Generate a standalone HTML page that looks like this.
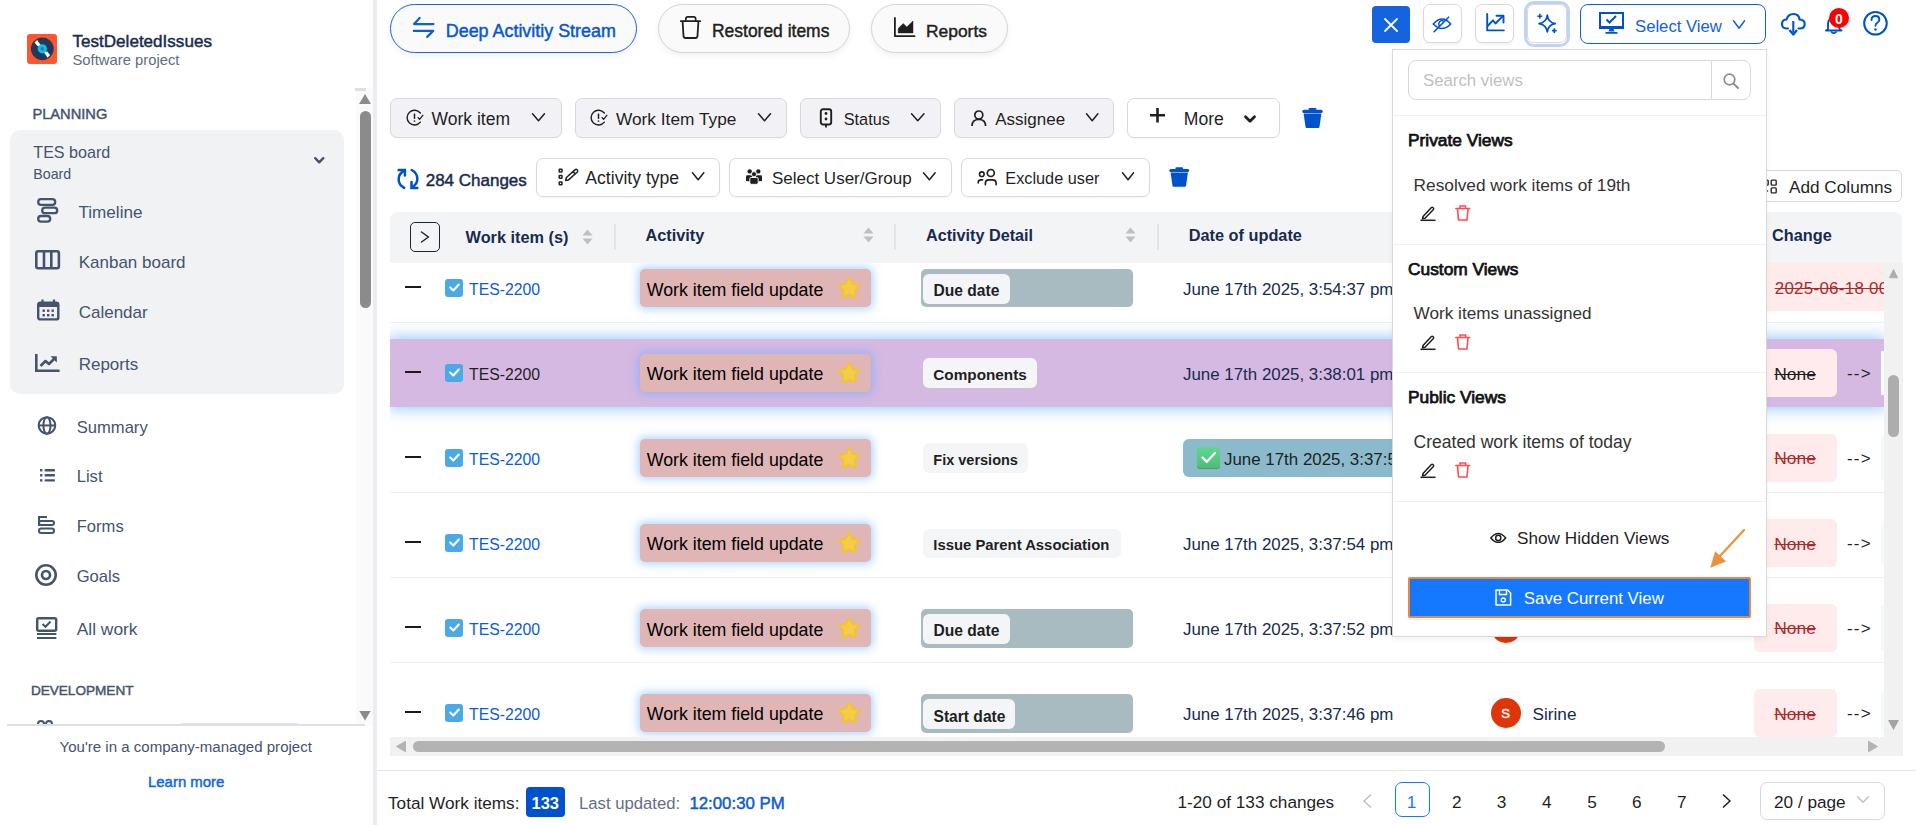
<!DOCTYPE html><html><head><meta charset="utf-8"><style>
html,body{margin:0;padding:0;width:1916px;height:825px;overflow:hidden;background:#fff;font-family:"Liberation Sans",sans-serif;}
.t{position:absolute;line-height:1;white-space:nowrap;}
svg{overflow:visible}
</style></head><body>
<div style="position:absolute;left:373.0px;top:0.0px;width:4.0px;height:825.0px;background:#ebecf0"></div>
<div style="position:absolute;left:356.0px;top:88.0px;width:17.0px;height:637.0px;background:#fafafa"></div>
<div style="position:absolute;left:355.0px;top:88.0px;width:11.0px;height:3.0px;background:#dcdfe4"></div>
<svg style="position:absolute;left:359.0px;top:94.0px;" width="12.0" height="10.0" viewBox="0 0 12 10" fill="none"><path d="M6 0 L12 10 L0 10 Z" fill="#8b8b8b"/></svg>
<div style="position:absolute;left:360.0px;top:111.0px;width:11.0px;height:197.0px;background:#8b8b8b;border-radius:6px"></div>
<svg style="position:absolute;left:359.0px;top:711.0px;" width="12.0" height="9.5" viewBox="0 0 12 10" fill="none"><path d="M0 0 L12 0 L6 10 Z" fill="#8b8b8b"/></svg>
<div style="position:absolute;left:27.0px;top:34.0px;width:30.0px;height:30.0px;background:#ff5630;border-radius:3px"></div>
<svg style="position:absolute;left:27.0px;top:34.0px;" width="30.0" height="30.0" viewBox="0 0 30 30" fill="none"><circle cx="15.3" cy="14.8" r="11.4" fill="#253858"/><path d="M7.5 8.6 L10.4 5.9 L12 10.5 L10.5 12 Z M23.1 21 L20.2 23.7 L18.6 19.1 L20.1 17.6 Z" fill="#fff"/><path d="M9 7.4 L21.6 22.2" stroke="#fff" stroke-width="2.6"/><circle cx="15.3" cy="14.8" r="4.6" fill="#00c7e6"/><circle cx="15.3" cy="14.8" r="1.7" fill="#6554c0"/></svg>
<div class="t" style="left:72.5px;top:33px;font-size:17.07px;font-weight:normal;color:#172b4d;-webkit-text-stroke:0.45px #172b4d;">TestDeletedIssues</div>
<div class="t" style="left:72.5px;top:53px;font-size:14.8px;font-weight:normal;color:#5e6c84;">Software project</div>
<div class="t" style="left:32.4px;top:107px;font-size:14.67px;font-weight:normal;color:#44546f;-webkit-text-stroke:0.45px #44546f;">PLANNING</div>
<div style="position:absolute;left:10.0px;top:129.6px;width:334.0px;height:264.8px;background:#f1f2f4;border-radius:10px"></div>
<div class="t" style="left:33.3px;top:144px;font-size:16.1px;font-weight:normal;color:#44546f;">TES board</div>
<div class="t" style="left:33.3px;top:167px;font-size:14.2px;font-weight:normal;color:#44546f;">Board</div>
<svg style="position:absolute;left:313.5px;top:157.0px;" width="10.5" height="7.0" viewBox="0 0 10.5 7" fill="none"><path d="M1.2 1.2 L5.25 5.3 L9.3 1.2" stroke="#44546f" stroke-width="2.4" stroke-linecap="round" stroke-linejoin="round"/></svg>
<svg style="position:absolute;left:37.0px;top:197.6px;" width="21.5" height="24.8" viewBox="0 0 21.5 24.8" fill="none"><rect x="1.2" y="1.2" width="17" height="5.6" rx="2.8" stroke="#44546f" stroke-width="2.3"/><rect x="5.2" y="9.6" width="15" height="5.6" rx="2.8" stroke="#44546f" stroke-width="2.3"/><rect x="1.2" y="18" width="12" height="5.6" rx="2.8" stroke="#44546f" stroke-width="2.3"/></svg>
<div class="t" style="left:78.5px;top:204px;font-size:17.1px;font-weight:normal;color:#44546f;">Timeline</div>
<svg style="position:absolute;left:35.4px;top:250.0px;" width="25.2" height="19.5" viewBox="0 0 25.2 19.5" fill="none"><rect x="1.3" y="1.3" width="22.6" height="16.9" rx="2" stroke="#44546f" stroke-width="2.6"/><path d="M9 1.5 V18 M16.3 1.5 V18" stroke="#44546f" stroke-width="2.6"/></svg>
<div class="t" style="left:78.7px;top:254px;font-size:17.0px;font-weight:normal;color:#44546f;">Kanban board</div>
<svg style="position:absolute;left:36.5px;top:299.0px;" width="22.5" height="21.6" viewBox="0 0 22.5 21.6" fill="none"><rect x="1.2" y="3.6" width="20.1" height="16.8" rx="2" stroke="#44546f" stroke-width="2.4"/><rect x="1" y="3.4" width="20.5" height="4.6" fill="#44546f"/><path d="M5.5 0.5 V4 M17 0.5 V4" stroke="#44546f" stroke-width="2.2"/><g fill="#44546f"><rect x="5.5" y="10.5" width="2.4" height="2.4"/><rect x="10" y="10.5" width="2.4" height="2.4"/><rect x="14.5" y="10.5" width="2.4" height="2.4"/><rect x="5.5" y="15" width="2.4" height="2.4"/><rect x="10" y="15" width="2.4" height="2.4"/><rect x="14.5" y="15" width="2.4" height="2.4"/></g></svg>
<div class="t" style="left:78.7px;top:304px;font-size:17.0px;font-weight:normal;color:#44546f;">Calendar</div>
<svg style="position:absolute;left:35.4px;top:353.6px;" width="24.6" height="18.1" viewBox="0 0 24.6 18.1" fill="none"><path d="M1.3 0 V16.8 H24.6" stroke="#44546f" stroke-width="2.6"/><path d="M5.5 12 L10.5 7 L14 10 L20.5 3.5" stroke="#44546f" stroke-width="2.6" stroke-linejoin="round"/><path d="M15.5 2.2 H21.8 V8.5 Z" fill="#44546f"/></svg>
<div class="t" style="left:78.7px;top:356px;font-size:17.0px;font-weight:normal;color:#44546f;">Reports</div>
<svg style="position:absolute;left:37.3px;top:416.4px;" width="19.9" height="18.9" viewBox="0 0 20 19" fill="none"><circle cx="10" cy="9.5" r="8.3" stroke="#44546f" stroke-width="2.1"/><ellipse cx="10" cy="9.5" rx="3.6" ry="8.3" stroke="#44546f" stroke-width="2"/><path d="M1.7 9.5 H18.3" stroke="#44546f" stroke-width="2"/></svg>
<div class="t" style="left:76.7px;top:420px;font-size:16.6px;font-weight:normal;color:#44546f;">Summary</div>
<svg style="position:absolute;left:39.5px;top:468.7px;" width="15.1" height="12.6" viewBox="0 0 15 12.6" fill="none"><g fill="#44546f"><rect x="0" y="0" width="2.4" height="2.4"/><rect x="0" y="5.1" width="2.4" height="2.4"/><rect x="0" y="10.2" width="2.4" height="2.4"/><rect x="4.5" y="0" width="10.5" height="2.4" rx="1"/><rect x="4.5" y="5.1" width="10.5" height="2.4" rx="1"/><rect x="4.5" y="10.2" width="10.5" height="2.4" rx="1"/></g></svg>
<div class="t" style="left:76.7px;top:469px;font-size:16.6px;font-weight:normal;color:#44546f;">List</div>
<svg style="position:absolute;left:38.0px;top:516.0px;" width="17.0" height="18.0" viewBox="0 0 17 18" fill="none"><path d="M1 1 H9" stroke="#44546f" stroke-width="2"/><rect x="1" y="5" width="15" height="4" rx="2" stroke="#44546f" stroke-width="2"/><rect x="1" y="12.5" width="15" height="4.5" rx="2.2" stroke="#44546f" stroke-width="2"/><path d="M1 0 V10" stroke="#44546f" stroke-width="2"/></svg>
<div class="t" style="left:76.7px;top:519px;font-size:16.6px;font-weight:normal;color:#44546f;">Forms</div>
<svg style="position:absolute;left:35.0px;top:563.8px;" width="22.0" height="22.0" viewBox="0 0 22 22" fill="none"><circle cx="11" cy="11" r="9.7" stroke="#44546f" stroke-width="2.6"/><circle cx="11" cy="11" r="4" stroke="#44546f" stroke-width="2.6"/></svg>
<div class="t" style="left:76.7px;top:569px;font-size:16.6px;font-weight:normal;color:#44546f;">Goals</div>
<svg style="position:absolute;left:36.4px;top:616.7px;" width="21.4" height="22.0" viewBox="0 0 21.4 22" fill="none"><rect x="1.2" y="1.2" width="19" height="12.5" rx="1.5" stroke="#44546f" stroke-width="2.4"/><path d="M6.5 7 L9.5 9.8 L14.5 4.5" stroke="#44546f" stroke-width="2"/><path d="M1 17 H20.4 M1 21 H20.4" stroke="#44546f" stroke-width="2.2"/></svg>
<div class="t" style="left:76.7px;top:621px;font-size:17.4px;font-weight:normal;color:#44546f;">All work</div>
<div class="t" style="left:30.9px;top:684px;font-size:13.59px;font-weight:normal;color:#44546f;-webkit-text-stroke:0.45px #44546f;">DEVELOPMENT</div>
<svg style="position:absolute;left:36.0px;top:719.0px;" width="18.0" height="6.0" viewBox="0 0 18 6" fill="none"><circle cx="5" cy="5" r="3" stroke="#44546f" stroke-width="2"/><circle cx="13" cy="5" r="3" stroke="#44546f" stroke-width="2"/></svg>
<div style="position:absolute;left:180.0px;top:723.0px;width:118.0px;height:2.0px;background:#e6e3f7;border-radius:2px"></div>
<div style="position:absolute;left:7.0px;top:724.0px;width:358.0px;height:2.0px;background:#dcdfe4"></div>
<div style="position:absolute;left:0.0px;top:726.0px;width:373.0px;height:99.0px;background:#fff"></div>
<div class="t" style="left:59.5px;top:739px;font-size:15.05px;font-weight:normal;color:#44546f;">You're in a company-managed project</div>
<div class="t" style="left:148.0px;top:775px;font-size:14.94px;font-weight:normal;color:#0c66e4;-webkit-text-stroke:0.45px #0c66e4;">Learn more</div>
<div style="position:absolute;left:390.0px;top:4.0px;width:247.0px;height:49.0px;box-sizing:border-box;border-radius:25px;background:#fafafa;box-shadow:0 3px 6px rgba(0,0,0,0.06);border:1.3px solid #1f62d6"></div>
<svg style="position:absolute;left:413.0px;top:17.0px;" width="21.0" height="20.0" viewBox="0 0 21 20" fill="none"><path d="M20.5 7.1 H1.1 L6.6 0.9" stroke="#0c5fd6" stroke-width="2.2" stroke-linecap="round" stroke-linejoin="round"/><path d="M0.8 13.9 H20.2 L14.2 19.9" stroke="#0c5fd6" stroke-width="2.2" stroke-linecap="round" stroke-linejoin="round"/></svg>
<div class="t" style="left:445.8px;top:23px;font-size:17.9px;font-weight:normal;color:#0656d0;-webkit-text-stroke:0.45px #0656d0;">Deep Activitiy Stream</div>
<div style="position:absolute;left:657.5px;top:4.4px;width:192.5px;height:48.2px;box-sizing:border-box;border-radius:25px;background:#fafafa;box-shadow:0 3px 6px rgba(0,0,0,0.06);border:1px solid #d4d4d4"></div>
<svg style="position:absolute;left:680.0px;top:16.0px;" width="21.0" height="23.0" viewBox="0 0 21 23" fill="none"><path d="M0.8 5.2 H20.2" stroke="#1f1f1f" stroke-width="1.8" stroke-linecap="round"/><path d="M5.8 5 V3 Q5.8 0.9 7.9 0.9 H13.6 Q15.7 0.9 15.7 3 V5" stroke="#1f1f1f" stroke-width="1.7"/><path d="M2.6 5.5 L3.5 19.8 Q3.7 22 5.7 22 H15.3 Q17.3 22 17.5 19.8 L18.4 5.5" stroke="#1f1f1f" stroke-width="1.8" stroke-linejoin="round"/></svg>
<div class="t" style="left:712.0px;top:23px;font-size:17.47px;font-weight:normal;color:#1f1f1f;-webkit-text-stroke:0.45px #1f1f1f;">Restored items</div>
<div style="position:absolute;left:871.0px;top:4.4px;width:136.5px;height:48.2px;box-sizing:border-box;border-radius:25px;background:#fafafa;box-shadow:0 3px 6px rgba(0,0,0,0.06);border:1px solid #d4d4d4"></div>
<svg style="position:absolute;left:894.0px;top:17.0px;" width="21.0" height="20.0" viewBox="0 0 21 20" fill="none"><path d="M0.9 0.9 V19.1 H20.6" stroke="#1f1f1f" stroke-width="1.8" stroke-linecap="round" stroke-linejoin="round"/><path d="M4.2 15.9 V11.5 L9.2 6.6 L12.8 10 L19 4 V15.9 Z" fill="#1f1f1f" stroke="#1f1f1f" stroke-width="0.5" stroke-linejoin="round"/></svg>
<div class="t" style="left:926.0px;top:23px;font-size:17.42px;font-weight:normal;color:#1f1f1f;-webkit-text-stroke:0.45px #1f1f1f;">Reports</div>
<div style="position:absolute;left:390.0px;top:98.0px;width:171.5px;height:39.5px;box-sizing:border-box;border-radius:7px;background:#f2f2f6;border:1px solid #d9d9d9;box-shadow:0 1px 2px rgba(0,0,0,0.04);"></div>
<svg style="position:absolute;left:405.0px;top:108.0px;" width="20.0" height="20.0" viewBox="0 0 20 20" fill="none"><path d="M15.33 5.04 A7.4 7.4 0 1 0 15.33 14.16" stroke="#1f1f1f" stroke-width="1.4" stroke-linecap="round"/><path d="M9.5 5.6 V10.9" stroke="#1f1f1f" stroke-width="1.5"/><circle cx="9.5" cy="13" r="0.85" fill="#1f1f1f"/><path d="M13.1 9.6 L14.6 11.3 L17.8 7.3" stroke="#1f1f1f" stroke-width="1.3" stroke-linecap="round" stroke-linejoin="round"/></svg>
<div class="t" style="left:431.6px;top:111px;font-size:17.5px;font-weight:normal;color:#1f1f1f;">Work item</div>
<svg style="position:absolute;left:532.0px;top:113.0px;" width="13.0" height="8.5" viewBox="0 0 13.0 8.5" fill="none"><path d="M0.5 0.8 L6.50 7.70 L12.50 0.8" stroke="#1f1f1f" stroke-width="1.5" stroke-linecap="round" stroke-linejoin="round"/></svg>
<div style="position:absolute;left:574.5px;top:98.0px;width:212.9px;height:39.5px;box-sizing:border-box;border-radius:7px;background:#f2f2f6;border:1px solid #d9d9d9;box-shadow:0 1px 2px rgba(0,0,0,0.04);"></div>
<svg style="position:absolute;left:589.0px;top:108.0px;" width="20.0" height="20.0" viewBox="0 0 20 20" fill="none"><path d="M15.33 5.04 A7.4 7.4 0 1 0 15.33 14.16" stroke="#1f1f1f" stroke-width="1.4" stroke-linecap="round"/><path d="M9.5 5.6 V10.9" stroke="#1f1f1f" stroke-width="1.5"/><circle cx="9.5" cy="13" r="0.85" fill="#1f1f1f"/><path d="M13.1 9.6 L14.6 11.3 L17.8 7.3" stroke="#1f1f1f" stroke-width="1.3" stroke-linecap="round" stroke-linejoin="round"/></svg>
<div class="t" style="left:616.0px;top:111px;font-size:17.3px;font-weight:normal;color:#1f1f1f;">Work Item Type</div>
<svg style="position:absolute;left:758.0px;top:113.0px;" width="13.0" height="8.5" viewBox="0 0 13.0 8.5" fill="none"><path d="M0.5 0.8 L6.50 7.70 L12.50 0.8" stroke="#1f1f1f" stroke-width="1.5" stroke-linecap="round" stroke-linejoin="round"/></svg>
<div style="position:absolute;left:800.3px;top:98.0px;width:140.4px;height:39.5px;box-sizing:border-box;border-radius:7px;background:#f2f2f6;border:1px solid #d9d9d9;box-shadow:0 1px 2px rgba(0,0,0,0.04);"></div>
<svg style="position:absolute;left:819.0px;top:108.0px;" width="14.0" height="20.0" viewBox="0 0 14 20" fill="none"><rect x="1.8" y="1.2" width="10.4" height="15.3" rx="2.2" stroke="#1f1f1f" stroke-width="1.9"/><circle cx="7" cy="5.5" r="1.4" fill="#1f1f1f"/><circle cx="7" cy="11" r="1.4" fill="#1f1f1f"/><path d="M7 16.5 V19.5" stroke="#1f1f1f" stroke-width="1.8"/></svg>
<div class="t" style="left:843.7px;top:111px;font-size:16.3px;font-weight:normal;color:#1f1f1f;">Status</div>
<svg style="position:absolute;left:910.5px;top:113.0px;" width="13.5" height="8.5" viewBox="0 0 13.5 8.5" fill="none"><path d="M0.5 0.8 L6.75 7.70 L13.00 0.8" stroke="#1f1f1f" stroke-width="1.5" stroke-linecap="round" stroke-linejoin="round"/></svg>
<div style="position:absolute;left:954.2px;top:98.0px;width:160.1px;height:39.5px;box-sizing:border-box;border-radius:7px;background:#f2f2f6;border:1px solid #d9d9d9;box-shadow:0 1px 2px rgba(0,0,0,0.04);"></div>
<svg style="position:absolute;left:971.0px;top:109.5px;" width="15.6" height="16.5" viewBox="0 0 15.6 16.5" fill="none"><circle cx="7.8" cy="5" r="4" stroke="#1f1f1f" stroke-width="1.7"/><path d="M1 16 C1 11.5 4 9.5 7.8 9.5 C11.6 9.5 14.6 11.5 14.6 16" stroke="#1f1f1f" stroke-width="1.7"/></svg>
<div class="t" style="left:995.2px;top:111px;font-size:17.0px;font-weight:normal;color:#1f1f1f;">Assignee</div>
<svg style="position:absolute;left:1085.6px;top:113.0px;" width="12.4" height="8.5" viewBox="0 0 12.4 8.5" fill="none"><path d="M0.5 0.8 L6.20 7.70 L11.90 0.8" stroke="#1f1f1f" stroke-width="1.5" stroke-linecap="round" stroke-linejoin="round"/></svg>
<div style="position:absolute;left:1127.0px;top:98.0px;width:153.0px;height:39.5px;box-sizing:border-box;border-radius:7px;background:#fff;border:1px solid #d9d9d9;box-shadow:0 1px 2px rgba(0,0,0,0.04);"></div>
<svg style="position:absolute;left:1150.0px;top:108.0px;" width="15.0" height="14.5" viewBox="0 0 15 14.5" fill="none"><path d="M7.5 0 V14.5 M0 7.25 H15" stroke="#1f1f1f" stroke-width="2.6"/></svg>
<div class="t" style="left:1183.8px;top:111px;font-size:17.6px;font-weight:normal;color:#1f1f1f;">More</div>
<svg style="position:absolute;left:1245.0px;top:115.5px;" width="10.0" height="6.0" viewBox="0 0 10.0 6.0" fill="none"><path d="M0.5 0.8 L5.00 5.20 L9.50 0.8" stroke="#1f1f1f" stroke-width="2.8" stroke-linecap="round" stroke-linejoin="round"/></svg>
<svg style="position:absolute;left:1302.0px;top:108.0px;" width="21.0" height="20.0" viewBox="0 0 21 20" fill="none"><path d="M7.5 1 H13.5" stroke="#0052cc" stroke-width="2" stroke-linecap="round"/><rect x="0.3" y="1.8" width="20.4" height="3.2" rx="1.6" fill="#0052cc"/><path d="M1.6 5.5 H19.4 L17.4 19.3 Q17.2 20 16.4 20 H4.6 Q3.8 20 3.6 19.3 Z" fill="#0052cc"/></svg>
<svg style="position:absolute;left:390.0px;top:160.0px;" width="40.0" height="35.0" viewBox="0 0 40 35" fill="none"><path d="M14.3 10.6 C6.8 14.5 6.8 24 14.2 27.9" stroke="#0052cc" stroke-width="2.5" stroke-linecap="round"/><path d="M8.6 9.9 H14.9 V15.6" stroke="#0052cc" stroke-width="2.5" stroke-linecap="round" stroke-linejoin="miter"/><path d="M21.7 10 C29.2 14 29.2 23.5 21.8 27.3" stroke="#0052cc" stroke-width="2.5" stroke-linecap="round"/><path d="M21.5 22.1 V28.1 H27.4" stroke="#0052cc" stroke-width="2.5" stroke-linecap="round" stroke-linejoin="miter"/></svg>
<div class="t" style="left:425.7px;top:172px;font-size:17.0px;font-weight:normal;color:#172b4d;-webkit-text-stroke:0.45px #172b4d;">284 Changes</div>
<div style="position:absolute;left:535.5px;top:157.5px;width:184.8px;height:39.0px;box-sizing:border-box;border-radius:7px;background:#fff;border:1px solid #d9d9d9;box-shadow:0 1px 2px rgba(0,0,0,0.04);"></div>
<svg style="position:absolute;left:556.0px;top:166.0px;" width="24.0" height="22.0" viewBox="0 0 24 22" fill="none"><g stroke="#1f1f1f" stroke-width="1.5"><rect x="3.2" y="3.3" width="2.8" height="2.7" rx="0.4"/><rect x="3.2" y="9.5" width="2.8" height="2.7" rx="0.4"/><rect x="3.2" y="16" width="2.8" height="2.7" rx="0.4"/></g><path d="M9.6 14.4 L10.39 11.54 L19.23 3.61 Q20.3 2.8 21.3 3.9 Q22.2 5 21.37 5.99 L12.53 13.92 Z M17.1 5.53 L19.24 7.91" stroke="#1f1f1f" stroke-width="1.5" stroke-linejoin="round"/></svg>
<div class="t" style="left:585.3px;top:170px;font-size:17.6px;font-weight:normal;color:#1f1f1f;">Activity type</div>
<svg style="position:absolute;left:691.5px;top:172.0px;" width="12.3" height="8.5" viewBox="0 0 12.3 8.5" fill="none"><path d="M0.5 0.8 L6.15 7.70 L11.80 0.8" stroke="#1f1f1f" stroke-width="1.5" stroke-linecap="round" stroke-linejoin="round"/></svg>
<div style="position:absolute;left:728.5px;top:157.5px;width:223.9px;height:39.0px;box-sizing:border-box;border-radius:7px;background:#fff;border:1px solid #d9d9d9;box-shadow:0 1px 2px rgba(0,0,0,0.04);"></div>
<svg style="position:absolute;left:745.0px;top:168.0px;" width="18.0" height="17.0" viewBox="0 0 18 17" fill="none"><g fill="#1f1f1f"><circle cx="4.7" cy="3.4" r="2.2"/><circle cx="13.3" cy="3.4" r="2.2"/><path d="M1 13 V8.5 Q1 7.2 2.3 7.2 H7 V13.5 Z"/><path d="M17 13 V8.5 Q17 7.2 15.7 7.2 H11 V13.5 Z"/></g><circle cx="9" cy="6.2" r="2.6" fill="#1f1f1f" stroke="#fff" stroke-width="0.9"/><path d="M4.8 10.8 Q4.8 9.5 6.1 9.5 H11.9 Q13.2 9.5 13.2 10.8 V14.8 Q13.2 16.3 11.7 16.3 H6.3 Q4.8 16.3 4.8 14.8 Z" fill="#1f1f1f" stroke="#fff" stroke-width="0.9"/></svg>
<div class="t" style="left:771.9px;top:170px;font-size:17.0px;font-weight:normal;color:#1f1f1f;">Select User/Group</div>
<svg style="position:absolute;left:922.9px;top:172.0px;" width="12.7" height="8.5" viewBox="0 0 12.7 8.5" fill="none"><path d="M0.5 0.8 L6.35 7.70 L12.20 0.8" stroke="#1f1f1f" stroke-width="1.5" stroke-linecap="round" stroke-linejoin="round"/></svg>
<div style="position:absolute;left:961.4px;top:157.5px;width:188.8px;height:39.0px;box-sizing:border-box;border-radius:7px;background:#fff;border:1px solid #d9d9d9;box-shadow:0 1px 2px rgba(0,0,0,0.04);"></div>
<svg style="position:absolute;left:977.0px;top:169.5px;" width="20.0" height="16.0" viewBox="0 0 20 16" fill="none"><circle cx="4.8" cy="4.2" r="2.3" stroke="#1f1f1f" stroke-width="1.6"/><circle cx="13.8" cy="3" r="3.5" stroke="#1f1f1f" stroke-width="1.7"/><path d="M8.4 14.6 V13.2 Q8.4 9.8 11.8 9.8 H15.7 Q19.1 9.8 19.1 13.2 V14.6" stroke="#1f1f1f" stroke-width="1.7" stroke-linecap="round"/><path d="M1.2 13 V12.6 Q1.2 9.9 3.9 9.9 H5.6" stroke="#1f1f1f" stroke-width="1.6" stroke-linecap="round"/></svg>
<div class="t" style="left:1005.3px;top:170px;font-size:16.3px;font-weight:normal;color:#1f1f1f;">Exclude user</div>
<svg style="position:absolute;left:1121.5px;top:172.0px;" width="12.1" height="8.5" viewBox="0 0 12.1 8.5" fill="none"><path d="M0.5 0.8 L6.05 7.70 L11.60 0.8" stroke="#1f1f1f" stroke-width="1.5" stroke-linecap="round" stroke-linejoin="round"/></svg>
<svg style="position:absolute;left:1169.0px;top:167.0px;" width="20.5" height="20.0" viewBox="0 0 21 20" fill="none"><path d="M7.5 1 H13.5" stroke="#0052cc" stroke-width="2" stroke-linecap="round"/><rect x="0.3" y="1.8" width="20.4" height="3.2" rx="1.6" fill="#0052cc"/><path d="M1.6 5.5 H19.4 L17.4 19.3 Q17.2 20 16.4 20 H4.6 Q3.8 20 3.6 19.3 Z" fill="#0052cc"/></svg>
<div style="position:absolute;left:1752.0px;top:170.0px;width:150.0px;height:31.5px;box-sizing:border-box;border-radius:5px;background:#fff;border:1px solid #d9d9d9"></div>
<svg style="position:absolute;left:1762.0px;top:179.0px;" width="15.5" height="15.0" viewBox="0 0 15.5 15" fill="none"><g stroke="#2a2a2a" stroke-width="1.4"><rect x="1.2" y="1.1" width="5" height="5" rx="0.8"/><rect x="9.2" y="1.1" width="5" height="5" rx="0.8"/><rect x="9.2" y="8.9" width="5" height="5" rx="0.8"/></g><circle cx="5.5" cy="12" r="0.8" fill="#2a2a2a"/></svg>
<div class="t" style="left:1789.0px;top:179px;font-size:17.2px;font-weight:normal;color:#1f1f1f;">Add Columns</div>
<div style="position:absolute;left:1372.0px;top:6.0px;width:38.0px;height:36.5px;background:#1464e0;border-radius:4px"></div>
<svg style="position:absolute;left:1384.0px;top:17.5px;" width="14.0" height="14.0" viewBox="0 0 14 14" fill="none"><path d="M1 1 L13 13 M13 1 L1 13" stroke="#fff" stroke-width="1.8" stroke-linecap="round"/></svg>
<div style="position:absolute;left:1422.5px;top:4.4px;width:39.0px;height:38.9px;box-sizing:border-box;border-radius:7px;background:#fff;border:1px solid #d9d9d9;box-shadow:0 2px 3px rgba(0,0,0,0.05);"></div>
<svg style="position:absolute;left:1432.0px;top:16.0px;" width="20.0" height="17.0" viewBox="0 0 20 17" fill="none"><path d="M1.3 8 Q10 -2 18.7 8 Q10 17 1.3 8 Z" stroke="#0052cc" stroke-width="1.5"/><path d="M8 10.5 A3 3 0 0 1 12 5.5" stroke="#0052cc" stroke-width="1.4"/><path d="M16.6 1.2 L2.1 15.7" stroke="#0052cc" stroke-width="1.6" stroke-linecap="round"/></svg>
<div style="position:absolute;left:1475.3px;top:4.4px;width:39.1px;height:38.9px;box-sizing:border-box;border-radius:7px;background:#fff;border:1px solid #d9d9d9;box-shadow:0 2px 3px rgba(0,0,0,0.05);"></div>
<svg style="position:absolute;left:1486.0px;top:14.0px;" width="19.0" height="18.0" viewBox="0 0 19 18" fill="none"><path d="M1.2 0 V16.4 H17.8" stroke="#0052cc" stroke-width="1.9" stroke-linecap="round" stroke-linejoin="round"/><path d="M1.5 12 L7 6.3 L9.5 9.5 L17.3 1.7" stroke="#0052cc" stroke-width="1.9" stroke-linejoin="round"/><path d="M10.5 1.8 H17.5 V8.5" stroke="#0052cc" stroke-width="1.9" stroke-linejoin="round" stroke-linecap="round"/></svg>
<div style="position:absolute;left:1524.2px;top:1.2px;width:45.8px;height:45.4px;box-sizing:border-box;border-radius:10px;border:3.5px solid #bfd4f3"></div>
<div style="position:absolute;left:1527.3px;top:4.4px;width:39.4px;height:38.9px;box-sizing:border-box;border-radius:7px;background:#fff;border:1px solid #d9d9d9;box-shadow:0 2px 3px rgba(0,0,0,0.05);box-shadow:none"></div>
<svg style="position:absolute;left:1536.0px;top:12.5px;" width="22.0" height="20.5" viewBox="0 0 22 20.5" fill="none"><path d="M11.3 2 Q12 9.5 19.2 10.6 Q12 11.7 11.3 19 Q10.6 11.7 3 10.6 Q10.6 9.5 11.3 2 Z" stroke="#0052cc" stroke-width="1.7" stroke-linejoin="round"/><path d="M3.8 0.8 V5.6 M1.4 3.2 H6.2" stroke="#0052cc" stroke-width="1.6"/><path d="M18.3 15.2 V20 M15.9 17.6 H20.7" stroke="#0052cc" stroke-width="1.6"/></svg>
<div style="position:absolute;left:1580.3px;top:4.0px;width:186.2px;height:39.7px;box-sizing:border-box;border-radius:8px;background:#fff;border:1.5px solid #1261d8"></div>
<svg style="position:absolute;left:1599.0px;top:11.7px;" width="25.0" height="21.7" viewBox="0 0 25 21.7" fill="none"><rect x="1" y="1" width="23" height="14" stroke="#0052cc" stroke-width="2"/><path d="M0 15 H25 V17 H0 Z" fill="#0052cc"/><path d="M7.5 7.5 L10.5 10.5 L17 4" stroke="#0052cc" stroke-width="2"/><path d="M10.5 17 L9.5 19.5 H15.5 L14.5 17 Z M6.5 20 H18.5 V21.7 H6.5 Z" fill="#0052cc"/></svg>
<div class="t" style="left:1635.0px;top:19px;font-size:16.7px;font-weight:normal;color:#1261d8;">Select View</div>
<svg style="position:absolute;left:1733.4px;top:20.0px;" width="12.1" height="9.0" viewBox="0 0 12.1 9.0" fill="none"><path d="M0.5 0.8 L6.05 8.20 L11.60 0.8" stroke="#1261d8" stroke-width="1.5" stroke-linecap="round" stroke-linejoin="round"/></svg>
<svg style="position:absolute;left:1780.7px;top:12.6px;" width="24.7" height="22.4" viewBox="0 0 24.7 22.4" fill="none"><path d="M7 15.5 H5.5 Q1 15.5 1 11 Q1 6.5 5.5 6.5 Q7 1 12.5 1 Q18 1 18.5 6.5 Q23.7 6.8 23.7 11 Q23.7 15.5 19 15.5 H17.5" stroke="#0052cc" stroke-width="2.1" stroke-linecap="round"/><path d="M12.3 8 V19.5" stroke="#0052cc" stroke-width="2.1"/><path d="M8.5 17 L12.3 21.5 L16 17" stroke="#0052cc" stroke-width="2.3" stroke-linejoin="round"/></svg>
<svg style="position:absolute;left:1825.3px;top:16.0px;" width="17.5" height="18.0" viewBox="0 0 17.5 18" fill="none"><path d="M3 13 V8 Q3 2 8.75 2 Q14.5 2 14.5 8 V13 L16.5 14.5 H1 Z" stroke="#0052cc" stroke-width="1.9" stroke-linejoin="round"/><path d="M6 15.5 Q8.75 19 11.5 15.5" stroke="#0052cc" stroke-width="1.9"/></svg>
<div style="position:absolute;left:1829.1px;top:8.0px;width:19.8px;height:19.8px;background:#ff0000;border-radius:50%"></div>
<div class="t" style="left:1835.1px;top:12px;font-size:14px;font-weight:bold;color:#fff;">0</div>
<svg style="position:absolute;left:1862.9px;top:11.2px;" width="24.9" height="24.6" viewBox="0 0 24.9 24.6" fill="none"><circle cx="12.45" cy="12.3" r="11.3" stroke="#0052cc" stroke-width="2"/><path d="M8.5 9 Q8.5 5 12.5 5 Q16.3 5 16.3 8.5 Q16.3 10.8 14 12 Q12.5 12.8 12.5 14.8" stroke="#0052cc" stroke-width="1.9" stroke-linecap="round"/><circle cx="12.5" cy="18.5" r="1.2" fill="#0052cc"/></svg>
<div style="position:absolute;left:390.0px;top:212.0px;width:1512.0px;height:51.0px;background:#f3f4f6;border-radius:8px 8px 0 0"></div>
<div style="position:absolute;left:410.0px;top:222.0px;width:29.6px;height:29.8px;box-sizing:border-box;border:1.6px solid #1d2433;border-radius:5px"></div>
<svg style="position:absolute;left:420.0px;top:231.0px;" width="10.0" height="12.0" viewBox="0 0 10 12" fill="none"><path d="M1.5 1 L8.5 6 L1.5 11" stroke="#1d2433" stroke-width="1.5" stroke-linejoin="round" stroke-linecap="round"/></svg>
<div class="t" style="left:465.6px;top:229px;font-size:16.3px;font-weight:bold;color:#172b4d;">Work item (s)</div>
<svg style="position:absolute;left:582.0px;top:229.0px;" width="11.0" height="16.0" viewBox="0 0 11 16" fill="none"><path d="M5.5 0.5 L10.5 6.5 H0.5 Z M5.5 15.5 L10.5 9.5 H0.5 Z" fill="#bfbfbf"/></svg>
<div style="position:absolute;left:614.0px;top:224.0px;width:1.5px;height:26.0px;background:#e3e4e8"></div>
<div class="t" style="left:645.5px;top:227px;font-size:16.3px;font-weight:bold;color:#172b4d;">Activity</div>
<svg style="position:absolute;left:863.0px;top:226.5px;" width="11.0" height="16.0" viewBox="0 0 11 16" fill="none"><path d="M5.5 0.5 L10.5 6.5 H0.5 Z M5.5 15.5 L10.5 9.5 H0.5 Z" fill="#bfbfbf"/></svg>
<div style="position:absolute;left:894.0px;top:224.0px;width:1.5px;height:26.0px;background:#e3e4e8"></div>
<div class="t" style="left:926.0px;top:227px;font-size:16.2px;font-weight:bold;color:#172b4d;">Activity Detail</div>
<svg style="position:absolute;left:1125.0px;top:226.5px;" width="11.0" height="16.0" viewBox="0 0 11 16" fill="none"><path d="M5.5 0.5 L10.5 6.5 H0.5 Z M5.5 15.5 L10.5 9.5 H0.5 Z" fill="#bfbfbf"/></svg>
<div style="position:absolute;left:1157.0px;top:224.0px;width:1.5px;height:26.0px;background:#e3e4e8"></div>
<div class="t" style="left:1188.8px;top:227px;font-size:16.3px;font-weight:bold;color:#172b4d;">Date of update</div>
<div class="t" style="left:1772.0px;top:227px;font-size:16.3px;font-weight:bold;color:#172b4d;">Change</div>
<div style="position:absolute;left:0;top:0;width:1916px;height:825px;clip-path:inset(263px 32px 88px 390px)">
<div style="position:absolute;left:390.0px;top:321.7px;width:1494.0px;height:1.0px;background:#efefef"></div>
<div style="position:absolute;left:390.0px;top:491.9px;width:1494.0px;height:1.0px;background:#efefef"></div>
<div style="position:absolute;left:390.0px;top:576.7px;width:1494.0px;height:1.0px;background:#efefef"></div>
<div style="position:absolute;left:390.0px;top:661.7px;width:1494.0px;height:1.0px;background:#efefef"></div>
<div style="position:absolute;left:390.0px;top:746.5px;width:1494.0px;height:1.0px;background:#efefef"></div>
<div style="position:absolute;left:390.0px;top:339.0px;width:1494.0px;height:68.0px;background:#d5b9e2;box-shadow:0 0 14px 2px rgba(70,160,255,0.55)"></div>
<div style="position:absolute;left:405.0px;top:286.1px;width:15.6px;height:2.1px;background:#1a1a1a"></div>
<div style="position:absolute;left:445.3px;top:279.3px;width:17.4px;height:17.4px;background:#4ba9e5;border-radius:3px"></div>
<svg style="position:absolute;left:448.5px;top:283.0px;" width="11.0" height="9.0" viewBox="0 0 11 9" fill="none"><path d="M1.2 4.5 L4.3 7.5 L9.8 1.5" stroke="#fff" stroke-width="2.1" stroke-linecap="round" stroke-linejoin="round"/></svg>
<div class="t" style="left:469.0px;top:282px;font-size:15.8px;font-weight:normal;color:#0b5bd8;">TES-2200</div>
<div style="position:absolute;left:640.0px;top:269.2px;width:231.0px;height:37.4px;background:#dfb5b5;border-radius:5px;box-shadow:0 0 8px 2px rgba(90,170,255,0.5)"></div>
<div class="t" style="left:646.7px;top:282px;font-size:17.8px;font-weight:normal;color:#000;">Work item field update</div>
<svg style="position:absolute;left:838.0px;top:276.7px;" width="22.4" height="22.1" viewBox="0 0 22.4 22.1" fill="none"><path d="M11.20 1.70 L14.37 7.23 L20.62 8.54 L16.34 13.27 L17.02 19.61 L11.20 17.00 L5.38 19.61 L6.06 13.27 L1.78 8.54 L8.03 7.23 Z" fill="#f1c232" stroke="#f1c232" stroke-width="3.2" stroke-linejoin="round"/><path d="M11.20 1.70 L14.37 7.23 L20.62 8.54 L16.34 13.27 L17.02 19.61 L11.20 17.00 L5.38 19.61 L6.06 13.27 L1.78 8.54 L8.03 7.23 Z" fill="#f5cc45" stroke="#f0c43a" stroke-width="1" stroke-linejoin="round"/></svg>
<div class="t" style="left:1183.0px;top:282px;font-size:16.9px;font-weight:normal;color:#172b4d;">June 17th 2025, 3:54:37 pm</div>
<div style="position:absolute;left:1754.0px;top:263.3px;width:166.0px;height:48.0px;background:#ffebeb;border-radius:6px"></div>
<div class="t" style="left:1774.7px;top:281px;font-size:16.9px;font-weight:normal;color:#a82a2a;text-decoration:line-through;letter-spacing:0.3px">2025-06-18 00</div>
<div style="position:absolute;left:405.0px;top:371.1px;width:15.6px;height:2.1px;background:#1a1a1a"></div>
<div style="position:absolute;left:445.3px;top:364.3px;width:17.4px;height:17.4px;background:#4ba9e5;border-radius:3px"></div>
<svg style="position:absolute;left:448.5px;top:368.0px;" width="11.0" height="9.0" viewBox="0 0 11 9" fill="none"><path d="M1.2 4.5 L4.3 7.5 L9.8 1.5" stroke="#fff" stroke-width="2.1" stroke-linecap="round" stroke-linejoin="round"/></svg>
<div class="t" style="left:469.0px;top:367px;font-size:15.8px;font-weight:normal;color:#1f1f1f;">TES-2200</div>
<div style="position:absolute;left:640.0px;top:354.2px;width:231.0px;height:37.4px;background:#dfb5b5;border-radius:5px;box-shadow:0 0 8px 2px rgba(90,170,255,0.5)"></div>
<div class="t" style="left:646.7px;top:366px;font-size:17.8px;font-weight:normal;color:#000;">Work item field update</div>
<svg style="position:absolute;left:838.0px;top:361.7px;" width="22.4" height="22.1" viewBox="0 0 22.4 22.1" fill="none"><path d="M11.20 1.70 L14.37 7.23 L20.62 8.54 L16.34 13.27 L17.02 19.61 L11.20 17.00 L5.38 19.61 L6.06 13.27 L1.78 8.54 L8.03 7.23 Z" fill="#f1c232" stroke="#f1c232" stroke-width="3.2" stroke-linejoin="round"/><path d="M11.20 1.70 L14.37 7.23 L20.62 8.54 L16.34 13.27 L17.02 19.61 L11.20 17.00 L5.38 19.61 L6.06 13.27 L1.78 8.54 L8.03 7.23 Z" fill="#f5cc45" stroke="#f0c43a" stroke-width="1" stroke-linejoin="round"/></svg>
<div class="t" style="left:1183.0px;top:367px;font-size:16.9px;font-weight:normal;color:#172b4d;">June 17th 2025, 3:38:01 pm</div>
<div style="position:absolute;left:1754.0px;top:349.0px;width:82.6px;height:47.5px;background:#ffebeb;border-radius:6px"></div>
<div class="t" style="left:1774.3px;top:366px;font-size:17.4px;font-weight:normal;color:#1f1f1f;text-decoration:line-through">None</div>
<div class="t" style="left:1847.0px;top:365px;font-size:17px;font-weight:normal;color:#1f1f1f;letter-spacing:1.2px">--&gt;</div>
<div style="position:absolute;left:1881.0px;top:351.0px;width:3.0px;height:44.0px;background:#f3fcf6"></div>
<div style="position:absolute;left:405.0px;top:456.1px;width:15.6px;height:2.1px;background:#1a1a1a"></div>
<div style="position:absolute;left:445.3px;top:449.3px;width:17.4px;height:17.4px;background:#4ba9e5;border-radius:3px"></div>
<svg style="position:absolute;left:448.5px;top:453.0px;" width="11.0" height="9.0" viewBox="0 0 11 9" fill="none"><path d="M1.2 4.5 L4.3 7.5 L9.8 1.5" stroke="#fff" stroke-width="2.1" stroke-linecap="round" stroke-linejoin="round"/></svg>
<div class="t" style="left:469.0px;top:452px;font-size:15.8px;font-weight:normal;color:#0b5bd8;">TES-2200</div>
<div style="position:absolute;left:640.0px;top:439.2px;width:231.0px;height:37.4px;background:#dfb5b5;border-radius:5px;box-shadow:0 0 8px 2px rgba(90,170,255,0.5)"></div>
<div class="t" style="left:646.7px;top:452px;font-size:17.8px;font-weight:normal;color:#000;">Work item field update</div>
<svg style="position:absolute;left:838.0px;top:446.7px;" width="22.4" height="22.1" viewBox="0 0 22.4 22.1" fill="none"><path d="M11.20 1.70 L14.37 7.23 L20.62 8.54 L16.34 13.27 L17.02 19.61 L11.20 17.00 L5.38 19.61 L6.06 13.27 L1.78 8.54 L8.03 7.23 Z" fill="#f1c232" stroke="#f1c232" stroke-width="3.2" stroke-linejoin="round"/><path d="M11.20 1.70 L14.37 7.23 L20.62 8.54 L16.34 13.27 L17.02 19.61 L11.20 17.00 L5.38 19.61 L6.06 13.27 L1.78 8.54 L8.03 7.23 Z" fill="#f5cc45" stroke="#f0c43a" stroke-width="1" stroke-linejoin="round"/></svg>
<div style="position:absolute;left:1754.0px;top:434.0px;width:82.6px;height:47.5px;background:#ffebeb;border-radius:6px"></div>
<div class="t" style="left:1774.3px;top:450px;font-size:17.4px;font-weight:normal;color:#a82a2a;text-decoration:line-through">None</div>
<div class="t" style="left:1847.0px;top:450px;font-size:17px;font-weight:normal;color:#1f1f1f;letter-spacing:1.2px">--&gt;</div>
<div style="position:absolute;left:1881.0px;top:436.0px;width:3.0px;height:44.0px;background:#f3fcf6"></div>
<div style="position:absolute;left:405.0px;top:541.1px;width:15.6px;height:2.1px;background:#1a1a1a"></div>
<div style="position:absolute;left:445.3px;top:534.3px;width:17.4px;height:17.4px;background:#4ba9e5;border-radius:3px"></div>
<svg style="position:absolute;left:448.5px;top:538.0px;" width="11.0" height="9.0" viewBox="0 0 11 9" fill="none"><path d="M1.2 4.5 L4.3 7.5 L9.8 1.5" stroke="#fff" stroke-width="2.1" stroke-linecap="round" stroke-linejoin="round"/></svg>
<div class="t" style="left:469.0px;top:537px;font-size:15.8px;font-weight:normal;color:#0b5bd8;">TES-2200</div>
<div style="position:absolute;left:640.0px;top:524.2px;width:231.0px;height:37.4px;background:#dfb5b5;border-radius:5px;box-shadow:0 0 8px 2px rgba(90,170,255,0.5)"></div>
<div class="t" style="left:646.7px;top:536px;font-size:17.8px;font-weight:normal;color:#000;">Work item field update</div>
<svg style="position:absolute;left:838.0px;top:531.7px;" width="22.4" height="22.1" viewBox="0 0 22.4 22.1" fill="none"><path d="M11.20 1.70 L14.37 7.23 L20.62 8.54 L16.34 13.27 L17.02 19.61 L11.20 17.00 L5.38 19.61 L6.06 13.27 L1.78 8.54 L8.03 7.23 Z" fill="#f1c232" stroke="#f1c232" stroke-width="3.2" stroke-linejoin="round"/><path d="M11.20 1.70 L14.37 7.23 L20.62 8.54 L16.34 13.27 L17.02 19.61 L11.20 17.00 L5.38 19.61 L6.06 13.27 L1.78 8.54 L8.03 7.23 Z" fill="#f5cc45" stroke="#f0c43a" stroke-width="1" stroke-linejoin="round"/></svg>
<div class="t" style="left:1183.0px;top:537px;font-size:16.9px;font-weight:normal;color:#172b4d;">June 17th 2025, 3:37:54 pm</div>
<div style="position:absolute;left:1754.0px;top:519.0px;width:82.6px;height:47.5px;background:#ffebeb;border-radius:6px"></div>
<div class="t" style="left:1774.3px;top:536px;font-size:17.4px;font-weight:normal;color:#a82a2a;text-decoration:line-through">None</div>
<div class="t" style="left:1847.0px;top:535px;font-size:17px;font-weight:normal;color:#1f1f1f;letter-spacing:1.2px">--&gt;</div>
<div style="position:absolute;left:1881.0px;top:521.0px;width:3.0px;height:44.0px;background:#f3fcf6"></div>
<div style="position:absolute;left:405.0px;top:626.1px;width:15.6px;height:2.1px;background:#1a1a1a"></div>
<div style="position:absolute;left:445.3px;top:619.3px;width:17.4px;height:17.4px;background:#4ba9e5;border-radius:3px"></div>
<svg style="position:absolute;left:448.5px;top:623.0px;" width="11.0" height="9.0" viewBox="0 0 11 9" fill="none"><path d="M1.2 4.5 L4.3 7.5 L9.8 1.5" stroke="#fff" stroke-width="2.1" stroke-linecap="round" stroke-linejoin="round"/></svg>
<div class="t" style="left:469.0px;top:622px;font-size:15.8px;font-weight:normal;color:#0b5bd8;">TES-2200</div>
<div style="position:absolute;left:640.0px;top:609.2px;width:231.0px;height:37.4px;background:#dfb5b5;border-radius:5px;box-shadow:0 0 8px 2px rgba(90,170,255,0.5)"></div>
<div class="t" style="left:646.7px;top:622px;font-size:17.8px;font-weight:normal;color:#000;">Work item field update</div>
<svg style="position:absolute;left:838.0px;top:616.7px;" width="22.4" height="22.1" viewBox="0 0 22.4 22.1" fill="none"><path d="M11.20 1.70 L14.37 7.23 L20.62 8.54 L16.34 13.27 L17.02 19.61 L11.20 17.00 L5.38 19.61 L6.06 13.27 L1.78 8.54 L8.03 7.23 Z" fill="#f1c232" stroke="#f1c232" stroke-width="3.2" stroke-linejoin="round"/><path d="M11.20 1.70 L14.37 7.23 L20.62 8.54 L16.34 13.27 L17.02 19.61 L11.20 17.00 L5.38 19.61 L6.06 13.27 L1.78 8.54 L8.03 7.23 Z" fill="#f5cc45" stroke="#f0c43a" stroke-width="1" stroke-linejoin="round"/></svg>
<div class="t" style="left:1183.0px;top:622px;font-size:16.9px;font-weight:normal;color:#172b4d;">June 17th 2025, 3:37:52 pm</div>
<div style="position:absolute;left:1754.0px;top:604.0px;width:82.6px;height:47.5px;background:#ffebeb;border-radius:6px"></div>
<div class="t" style="left:1774.3px;top:620px;font-size:17.4px;font-weight:normal;color:#a82a2a;text-decoration:line-through">None</div>
<div class="t" style="left:1847.0px;top:620px;font-size:17px;font-weight:normal;color:#1f1f1f;letter-spacing:1.2px">--&gt;</div>
<div style="position:absolute;left:1881.0px;top:606.0px;width:3.0px;height:44.0px;background:#f3fcf6"></div>
<div style="position:absolute;left:405.0px;top:711.1px;width:15.6px;height:2.1px;background:#1a1a1a"></div>
<div style="position:absolute;left:445.3px;top:704.3px;width:17.4px;height:17.4px;background:#4ba9e5;border-radius:3px"></div>
<svg style="position:absolute;left:448.5px;top:708.0px;" width="11.0" height="9.0" viewBox="0 0 11 9" fill="none"><path d="M1.2 4.5 L4.3 7.5 L9.8 1.5" stroke="#fff" stroke-width="2.1" stroke-linecap="round" stroke-linejoin="round"/></svg>
<div class="t" style="left:469.0px;top:707px;font-size:15.8px;font-weight:normal;color:#0b5bd8;">TES-2200</div>
<div style="position:absolute;left:640.0px;top:694.2px;width:231.0px;height:37.4px;background:#dfb5b5;border-radius:5px;box-shadow:0 0 8px 2px rgba(90,170,255,0.5)"></div>
<div class="t" style="left:646.7px;top:706px;font-size:17.8px;font-weight:normal;color:#000;">Work item field update</div>
<svg style="position:absolute;left:838.0px;top:701.7px;" width="22.4" height="22.1" viewBox="0 0 22.4 22.1" fill="none"><path d="M11.20 1.70 L14.37 7.23 L20.62 8.54 L16.34 13.27 L17.02 19.61 L11.20 17.00 L5.38 19.61 L6.06 13.27 L1.78 8.54 L8.03 7.23 Z" fill="#f1c232" stroke="#f1c232" stroke-width="3.2" stroke-linejoin="round"/><path d="M11.20 1.70 L14.37 7.23 L20.62 8.54 L16.34 13.27 L17.02 19.61 L11.20 17.00 L5.38 19.61 L6.06 13.27 L1.78 8.54 L8.03 7.23 Z" fill="#f5cc45" stroke="#f0c43a" stroke-width="1" stroke-linejoin="round"/></svg>
<div class="t" style="left:1183.0px;top:707px;font-size:16.9px;font-weight:normal;color:#172b4d;">June 17th 2025, 3:37:46 pm</div>
<div style="position:absolute;left:1754.0px;top:689.0px;width:82.6px;height:47.5px;background:#ffebeb;border-radius:6px"></div>
<div class="t" style="left:1774.3px;top:706px;font-size:17.4px;font-weight:normal;color:#a82a2a;text-decoration:line-through">None</div>
<div class="t" style="left:1847.0px;top:705px;font-size:17px;font-weight:normal;color:#1f1f1f;letter-spacing:1.2px">--&gt;</div>
<div style="position:absolute;left:1881.0px;top:691.0px;width:3.0px;height:44.0px;background:#f3fcf6"></div>
<div style="position:absolute;left:921.2px;top:269.2px;width:211.4px;height:38.0px;background:#a7bbc0;border-radius:5px"></div>
<div style="position:absolute;left:923.4px;top:274.0px;width:86.3px;height:29.7px;background:#f4f5f7;border-radius:6px"></div>
<div class="t" style="left:933.5px;top:283px;font-size:15.6px;font-weight:bold;color:#1f1f1f;">Due date</div>
<div style="position:absolute;left:922.7px;top:358.0px;width:114.3px;height:30.0px;background:#f4f5f7;border-radius:6px"></div>
<div class="t" style="left:933.3px;top:367px;font-size:15.3px;font-weight:bold;color:#1f1f1f;">Components</div>
<div style="position:absolute;left:922.7px;top:443.0px;width:105.2px;height:29.7px;background:#f4f5f7;border-radius:6px"></div>
<div class="t" style="left:933.3px;top:453px;font-size:14.5px;font-weight:bold;color:#1f1f1f;">Fix versions</div>
<div style="position:absolute;left:922.7px;top:528.6px;width:197.9px;height:29.2px;background:#f4f5f7;border-radius:6px"></div>
<div class="t" style="left:933.3px;top:538px;font-size:14.85px;font-weight:bold;color:#1f1f1f;">Issue Parent Association</div>
<div style="position:absolute;left:921.2px;top:609.0px;width:211.4px;height:38.5px;background:#a7bbc0;border-radius:5px"></div>
<div style="position:absolute;left:923.4px;top:613.8px;width:86.4px;height:30.2px;background:#f4f5f7;border-radius:6px"></div>
<div class="t" style="left:933.5px;top:623px;font-size:15.6px;font-weight:bold;color:#1f1f1f;">Due date</div>
<div style="position:absolute;left:921.2px;top:694.2px;width:211.4px;height:38.6px;background:#a7bbc0;border-radius:5px"></div>
<div style="position:absolute;left:923.4px;top:699.0px;width:91.2px;height:30.3px;background:#f4f5f7;border-radius:6px"></div>
<div class="t" style="left:933.5px;top:709px;font-size:15.6px;font-weight:bold;color:#1f1f1f;">Start date</div>
<div style="position:absolute;left:1183.0px;top:439.0px;width:217.0px;height:37.8px;background:#8bbacc;border-radius:6px"></div>
<div style="position:absolute;left:1197.0px;top:447.0px;width:22.6px;height:22.0px;background:linear-gradient(#63d58f,#4cbd74);border-radius:3px;box-shadow:inset 0 -1px 0 rgba(0,0,0,0.15)"></div>
<svg style="position:absolute;left:1200.5px;top:451.0px;" width="15.5" height="13.0" viewBox="0 0 15.5 13" fill="none"><path d="M1.5 6.5 L5.8 10.8 L14 2" stroke="#fff" stroke-width="2.4" stroke-linecap="round" stroke-linejoin="round"/></svg>
<div class="t" style="left:1224.0px;top:452px;font-size:16.9px;font-weight:normal;color:#1f1f1f;">June 17th 2025, 3:37:54 pm</div>
<div style="position:absolute;left:1490.8px;top:613.0px;width:29.8px;height:30.0px;background:#de350b;border-radius:50%"></div>
<div class="t" style="left:1501.3px;top:622px;font-size:13px;font-weight:normal;color:#fff;-webkit-text-stroke:0.45px #fff;">S</div>
<div class="t" style="left:1532.5px;top:621px;font-size:17.2px;font-weight:normal;color:#172b4d;">Sirine</div>
<div style="position:absolute;left:1490.8px;top:698.0px;width:29.8px;height:30.0px;background:#de350b;border-radius:50%"></div>
<div class="t" style="left:1501.3px;top:707px;font-size:13px;font-weight:normal;color:#fff;-webkit-text-stroke:0.45px #fff;">S</div>
<div class="t" style="left:1532.5px;top:706px;font-size:17.2px;font-weight:normal;color:#172b4d;">Sirine</div>
</div>
<div style="position:absolute;left:1884.0px;top:263.0px;width:18.7px;height:493.0px;background:#f1f1f1"></div>
<svg style="position:absolute;left:1889.0px;top:268.7px;" width="9.0" height="9.3" viewBox="0 0 9 9.3" fill="none"><path d="M4.5 0.5 L8.6 8.8 H0.4 Z" fill="#adadad" stroke="#adadad" stroke-width="0.8" stroke-linejoin="round"/></svg>
<div style="position:absolute;left:1888.0px;top:375.3px;width:11.2px;height:61.4px;background:#adadad;border-radius:6px"></div>
<svg style="position:absolute;left:1888.0px;top:720.0px;" width="11.0" height="10.0" viewBox="0 0 11 10" fill="none"><path d="M0 0 H11 L5.5 10 Z" fill="#a3a3a3"/></svg>
<div style="position:absolute;left:390.0px;top:737.0px;width:1494.0px;height:19.0px;background:#f1f1f1"></div>
<svg style="position:absolute;left:396.0px;top:741.0px;" width="10.0" height="11.0" viewBox="0 0 10 11" fill="none"><path d="M0.5 5.5 L9.5 0.3 V10.7 Z" fill="#b3b3b3" stroke="#b3b3b3" stroke-width="1" stroke-linejoin="round"/></svg>
<div style="position:absolute;left:412.5px;top:740.8px;width:1252.5px;height:11.2px;background:#b3b3b3;border-radius:6px"></div>
<svg style="position:absolute;left:1868.0px;top:741.0px;" width="10.0" height="11.0" viewBox="0 0 10 11" fill="none"><path d="M9.5 5.5 L0.5 0.3 V10.7 Z" fill="#b3b3b3" stroke="#b3b3b3" stroke-width="1" stroke-linejoin="round"/></svg>
<div style="position:absolute;left:377.0px;top:770.0px;width:1539.0px;height:1.2px;background:#e2e4e9"></div>
<div class="t" style="left:388.0px;top:795px;font-size:17.2px;font-weight:normal;color:#1f1f1f;">Total Work items:</div>
<div style="position:absolute;left:526.2px;top:787.2px;width:38.5px;height:29.6px;background:#0052cc;border-radius:4px"></div>
<div class="t" style="left:531.5px;top:795px;font-size:16.5px;font-weight:bold;color:#fff;">133</div>
<div class="t" style="left:579.0px;top:796px;font-size:16.7px;font-weight:normal;color:#626f86;">Last updated:</div>
<div class="t" style="left:689.4px;top:796px;font-size:16.82px;font-weight:normal;color:#0c5ad0;-webkit-text-stroke:0.45px #0c5ad0;">12:00:30 PM</div>
<div class="t" style="left:1177.5px;top:794px;font-size:17.2px;font-weight:normal;color:#1f1f1f;">1-20 of 133 changes</div>
<svg style="position:absolute;left:1362.0px;top:794.0px;" width="10.0" height="14.0" viewBox="0 0 10 14" fill="none"><path d="M8.5 1 L2 7 L8.5 13" stroke="#bfbfbf" stroke-width="1.6" stroke-linecap="round" stroke-linejoin="round"/></svg>
<div style="position:absolute;left:1395.0px;top:782.4px;width:34.6px;height:34.6px;box-sizing:border-box;border:1.2px solid #1677ff;border-radius:7px"></div>
<div class="t" style="left:1406.7px;top:794px;font-size:17.2px;font-weight:normal;color:#1677ff;">1</div>
<div class="t" style="left:1452.0px;top:794px;font-size:17.2px;font-weight:normal;color:#1f1f1f;">2</div>
<div class="t" style="left:1496.7px;top:794px;font-size:17.2px;font-weight:normal;color:#1f1f1f;">3</div>
<div class="t" style="left:1542.0px;top:794px;font-size:17.2px;font-weight:normal;color:#1f1f1f;">4</div>
<div class="t" style="left:1587.2px;top:794px;font-size:17.2px;font-weight:normal;color:#1f1f1f;">5</div>
<div class="t" style="left:1632.0px;top:794px;font-size:17.2px;font-weight:normal;color:#1f1f1f;">6</div>
<div class="t" style="left:1676.9px;top:794px;font-size:17.2px;font-weight:normal;color:#1f1f1f;">7</div>
<svg style="position:absolute;left:1722.0px;top:794.0px;" width="10.0" height="14.0" viewBox="0 0 10 14" fill="none"><path d="M1.5 1 L8 7 L1.5 13" stroke="#1f1f1f" stroke-width="1.6" stroke-linecap="round" stroke-linejoin="round"/></svg>
<div style="position:absolute;left:1760.0px;top:781.6px;width:125.3px;height:38.2px;box-sizing:border-box;border:1px solid #d9d9d9;border-radius:7px"></div>
<div class="t" style="left:1774.0px;top:794px;font-size:17.2px;font-weight:normal;color:#1f1f1f;">20 / page</div>
<svg style="position:absolute;left:1857.0px;top:796.0px;" width="12.0" height="7.0" viewBox="0 0 12.0 7.0" fill="none"><path d="M0.5 0.8 L6.00 6.20 L11.50 0.8" stroke="#bfbfbf" stroke-width="1.4" stroke-linecap="round" stroke-linejoin="round"/></svg>
<div style="position:absolute;left:1391.8px;top:49.3px;width:374.8px;height:587.7px;box-sizing:border-box;background:#fff;border:1px solid #d9d9d9;box-shadow:0 3px 6px rgba(0,0,0,0.05)"></div>
<div style="position:absolute;left:1408.3px;top:60.2px;width:342.3px;height:39.4px;box-sizing:border-box;border:1px solid #d9d9d9;border-radius:8px"></div>
<div style="position:absolute;left:1711.0px;top:60.7px;width:1.0px;height:38.4px;background:#d9d9d9"></div>
<div class="t" style="left:1423.0px;top:73px;font-size:16.8px;font-weight:normal;color:#bfbfbf;">Search views</div>
<svg style="position:absolute;left:1723.0px;top:73.0px;" width="16.0" height="16.0" viewBox="0 0 16 16" fill="none"><circle cx="6.5" cy="6.5" r="5.3" stroke="#8c8c8c" stroke-width="1.7"/><path d="M10.3 10.3 L15 15" stroke="#8c8c8c" stroke-width="1.9" stroke-linecap="round"/></svg>
<div style="position:absolute;left:1393.6px;top:114.7px;width:372.0px;height:1.0px;background:#f0f0f0"></div>
<div style="position:absolute;left:1393.6px;top:243.7px;width:372.0px;height:1.0px;background:#f0f0f0"></div>
<div style="position:absolute;left:1393.6px;top:371.9px;width:372.0px;height:1.0px;background:#f0f0f0"></div>
<div style="position:absolute;left:1393.6px;top:500.9px;width:372.0px;height:1.0px;background:#f0f0f0"></div>
<div class="t" style="left:1408.0px;top:132px;font-size:17.34px;font-weight:normal;color:#111111;-webkit-text-stroke:0.75px #111111;">Private Views</div>
<div class="t" style="left:1413.6px;top:177px;font-size:17.28px;font-weight:normal;color:#333333;">Resolved work items of 19th</div>
<svg style="position:absolute;left:1420.0px;top:205.3px;" width="16.0" height="16.0" viewBox="0 0 16 16" fill="none"><path d="M3 11.5 L11.2 2.8 Q12.2 1.8 13.2 2.8 Q14.2 3.8 13.2 4.8 L5 13.2 L2.5 13.8 Z" stroke="#1f1f1f" stroke-width="1.5" stroke-linejoin="round"/><path d="M0.5 15.3 H15.5" stroke="#1f1f1f" stroke-width="1.5"/></svg>
<svg style="position:absolute;left:1455.0px;top:205.3px;" width="15.5" height="16.0" viewBox="0 0 15.5 16" fill="none"><path d="M0.8 3.5 H14.7" stroke="#ff4d4f" stroke-width="1.5" stroke-linecap="round"/><path d="M5 3.5 V1 H10.5 V3.5" stroke="#ff4d4f" stroke-width="1.5"/><path d="M2.5 3.8 L3.5 15 H12 L13 3.8" stroke="#ff4d4f" stroke-width="1.6" stroke-linejoin="round"/></svg>
<div class="t" style="left:1408.0px;top:261px;font-size:17.34px;font-weight:normal;color:#111111;-webkit-text-stroke:0.75px #111111;">Custom Views</div>
<div class="t" style="left:1413.6px;top:305px;font-size:17.16px;font-weight:normal;color:#333333;">Work items unassigned</div>
<svg style="position:absolute;left:1420.0px;top:334.0px;" width="16.0" height="16.0" viewBox="0 0 16 16" fill="none"><path d="M3 11.5 L11.2 2.8 Q12.2 1.8 13.2 2.8 Q14.2 3.8 13.2 4.8 L5 13.2 L2.5 13.8 Z" stroke="#1f1f1f" stroke-width="1.5" stroke-linejoin="round"/><path d="M0.5 15.3 H15.5" stroke="#1f1f1f" stroke-width="1.5"/></svg>
<svg style="position:absolute;left:1455.0px;top:334.0px;" width="15.5" height="16.0" viewBox="0 0 15.5 16" fill="none"><path d="M0.8 3.5 H14.7" stroke="#ff4d4f" stroke-width="1.5" stroke-linecap="round"/><path d="M5 3.5 V1 H10.5 V3.5" stroke="#ff4d4f" stroke-width="1.5"/><path d="M2.5 3.8 L3.5 15 H12 L13 3.8" stroke="#ff4d4f" stroke-width="1.6" stroke-linejoin="round"/></svg>
<div class="t" style="left:1408.0px;top:389px;font-size:17.34px;font-weight:normal;color:#111111;-webkit-text-stroke:0.75px #111111;">Public Views</div>
<div class="t" style="left:1413.6px;top:434px;font-size:17.51px;font-weight:normal;color:#333333;">Created work items of today</div>
<svg style="position:absolute;left:1420.0px;top:462.3px;" width="16.0" height="16.0" viewBox="0 0 16 16" fill="none"><path d="M3 11.5 L11.2 2.8 Q12.2 1.8 13.2 2.8 Q14.2 3.8 13.2 4.8 L5 13.2 L2.5 13.8 Z" stroke="#1f1f1f" stroke-width="1.5" stroke-linejoin="round"/><path d="M0.5 15.3 H15.5" stroke="#1f1f1f" stroke-width="1.5"/></svg>
<svg style="position:absolute;left:1455.0px;top:462.3px;" width="15.5" height="16.0" viewBox="0 0 15.5 16" fill="none"><path d="M0.8 3.5 H14.7" stroke="#ff4d4f" stroke-width="1.5" stroke-linecap="round"/><path d="M5 3.5 V1 H10.5 V3.5" stroke="#ff4d4f" stroke-width="1.5"/><path d="M2.5 3.8 L3.5 15 H12 L13 3.8" stroke="#ff4d4f" stroke-width="1.6" stroke-linejoin="round"/></svg>
<svg style="position:absolute;left:1489.5px;top:531.5px;" width="16.5" height="11.8" viewBox="0 0 16.5 11.8" fill="none"><path d="M0.8 5.9 Q8.25 -3 15.7 5.9 Q8.25 14.8 0.8 5.9 Z" stroke="#1f1f1f" stroke-width="1.5"/><circle cx="8.25" cy="5.9" r="2.6" stroke="#1f1f1f" stroke-width="1.5"/></svg>
<div class="t" style="left:1517.0px;top:530px;font-size:17.18px;font-weight:normal;color:#1f1f1f;">Show Hidden Views</div>
<div style="position:absolute;left:1408.4px;top:576.8px;width:342.6px;height:41.2px;box-sizing:border-box;background:#1677ff;border:2.2px solid #e8883a;border-radius:2px;box-shadow:0 2px 0 rgba(0,0,0,0.06)"></div>
<svg style="position:absolute;left:1495.4px;top:589.0px;" width="16.6" height="17.0" viewBox="0 0 16.6 17" fill="none"><path d="M1 1 H12.5 L15.6 4 V16 H1 Z" stroke="#fff" stroke-width="1.5" stroke-linejoin="round"/><path d="M4.5 1 V5.5 H11.5 V1" stroke="#fff" stroke-width="1.4"/><circle cx="8.3" cy="11" r="2" stroke="#fff" stroke-width="1.4"/></svg>
<div class="t" style="left:1523.8px;top:591px;font-size:16.83px;font-weight:normal;color:#fff;">Save Current View</div>
<svg style="position:absolute;left:1710.0px;top:529.0px;" width="35.0" height="39.0" viewBox="0 0 35 39" fill="none"><path d="M34 1 L10 27" stroke="#e8913f" stroke-width="2.2" stroke-linecap="round"/><path d="M0.7 38.3 L5.3 22.7 L15.7 32.3 Z" fill="#e8913f" stroke="#e8913f" stroke-width="0.6" stroke-linejoin="round"/></svg>
</body></html>
